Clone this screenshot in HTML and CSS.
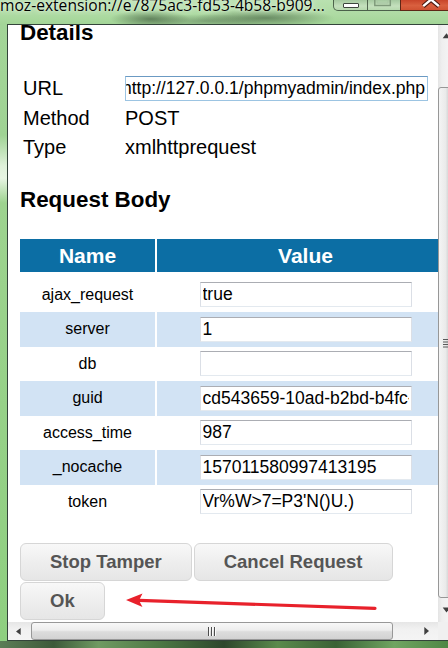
FILE: index.html
```html
<!DOCTYPE html>
<html lang="en">
<head>
<meta charset="utf-8">
<title>Tamper Request</title>
<link rel="stylesheet" href="styles.css">
</head>
<body>
<div class="window">
  <header class="titlebar">
    <span class="title">moz-extension://e7875ac3-fd53-4b58-b909...</span>
    <div class="caption">
      <span class="cap-btn cap-min"><span class="min-glyph"></span></span>
      <span class="cap-btn cap-max">
        <svg class="cap-svg" width="33" height="11" viewBox="0 0 33 11"><rect x="7" y="-7" width="16" height="12.5" fill="none" stroke="#7f9a7b" stroke-width="1.5"/><rect x="9.5" y="-4" width="11" height="7" fill="none" stroke="#a9c6a4" stroke-width="1"/></svg>
      </span>
      <span class="cap-btn cap-close">
        <svg class="cap-svg" width="48" height="11" viewBox="0 0 48 11"><path d="M22.7 6.2 L30.7 -0.6 L38.7 6.2" fill="none" stroke="#4a1a10" stroke-width="4.6" stroke-linejoin="miter"/><path d="M22.7 6.2 L30.7 -0.6 L38.7 6.2" fill="none" stroke="#ffffff" stroke-width="2.4" stroke-linejoin="miter"/></svg>
      </span>
    </div>
  </header>
  <div class="frame">
    <div class="left-edge"></div>
    <div class="client">
      <div class="viewport">
        <main class="page">
          <h2 class="heading heading-details">Details</h2>
          <div class="details">
            <span class="dlabel">URL</span>
            <div class="url-box"><span class="url-text">http://127.0.0.1/phpmyadmin/index.php</span></div>
            <span class="dlabel">Method</span><span class="dvalue">POST</span>
            <span class="dlabel">Type</span><span class="dvalue">xmlhttprequest</span>
          </div>
          <h2 class="heading heading-body">Request Body</h2>
          <div class="params">
            <div class="prow phead"><div class="pcell">Name</div><div class="pcell">Value</div></div>
            <div class="prow"><div class="pcell pname">ajax_request</div><div class="pcell pval"><input class="field" type="text" value="true"></div></div>
            <div class="prow alt"><div class="pcell pname">server</div><div class="pcell pval"><input class="field" type="text" value="1"></div></div>
            <div class="prow"><div class="pcell pname">db</div><div class="pcell pval"><input class="field" type="text" value=""></div></div>
            <div class="prow alt"><div class="pcell pname">guid</div><div class="pcell pval"><input class="field" type="text" value="cd543659-10ad-b2bd-b4fc-8e2a61d0f3b7"></div></div>
            <div class="prow"><div class="pcell pname">access_time</div><div class="pcell pval"><input class="field" type="text" value="987"></div></div>
            <div class="prow alt"><div class="pcell pname">_nocache</div><div class="pcell pval"><input class="field" type="text" value="157011580997413195"></div></div>
            <div class="prow"><div class="pcell pname">token</div><div class="pcell pval"><input class="field" type="text" value="Vr%W&gt;7=P3'N()U.)"></div></div>
          </div>
          <div class="actions">
            <button class="btn" type="button">Stop Tamper</button>
            <button class="btn" type="button">Cancel Request</button>
            <button class="btn" type="button">Ok</button>
          </div>
          <svg class="annot-arrow" width="260" height="26" viewBox="0 0 260 26">
            <line x1="19" y1="12.4" x2="255" y2="20.3" stroke="#e8212b" stroke-width="3.2" stroke-linecap="round"/>
            <polygon points="6,12 22.5,5.6 19,12.5 22.5,19" fill="#e8212b"/>
          </svg>
        </main>
        <div class="vscroll">
          <div class="vs-btn"><svg width="17" height="17" viewBox="0 0 17 17"><polygon points="8.5,8.3 12.3,13.3 4.7,13.3" fill="#404040"/></svg></div>
          <div class="vs-track vs-track-top"></div>
          <div class="vs-thumb"><svg width="10" height="10" viewBox="0 0 10 10"><g stroke-width="1"><line x1="1" y1="1.5" x2="9" y2="1.5" stroke="#5a5a5a"/><line x1="1" y1="4" x2="9" y2="4" stroke="#5a5a5a"/><line x1="1" y1="6.5" x2="9" y2="6.5" stroke="#5a5a5a"/><line x1="1" y1="9" x2="9" y2="9" stroke="#5a5a5a"/></g></svg></div>
          <div class="vs-track vs-track-bottom"></div>
          <div class="vs-btn"><svg width="17" height="17" viewBox="0 0 17 17"><polygon points="4.7,6.5 12.3,6.5 8.5,11.5" fill="#404040"/></svg></div>
          <div class="vs-tail"></div>
        </div>
      </div>
      <div class="hscroll">
        <div class="hs-btn hs-left"><svg width="23" height="18" viewBox="0 0 23 18"><polygon points="8,9.5 12.7,6 12.7,13" fill="#404040"/></svg></div>
        <div class="hs-thumb"><svg width="10" height="9" viewBox="0 0 10 9"><g stroke-width="1"><line x1="1.5" y1="0" x2="1.5" y2="9" stroke="#4d4d4d"/><line x1="2.5" y1="0" x2="2.5" y2="9" stroke="#fafafa"/><line x1="4.5" y1="0" x2="4.5" y2="9" stroke="#4d4d4d"/><line x1="5.5" y1="0" x2="5.5" y2="9" stroke="#fafafa"/><line x1="7.5" y1="0" x2="7.5" y2="9" stroke="#4d4d4d"/><line x1="8.5" y1="0" x2="8.5" y2="9" stroke="#fafafa"/></g></svg></div>
        <div class="hs-track"></div>
        <div class="hs-btn hs-right"><svg width="17" height="18" viewBox="0 0 17 18"><polygon points="3.3,5 8,9 3.3,13" fill="#404040"/></svg></div>
        <div class="hs-corner"></div>
      </div>
    </div>
  </div>
  <div class="bottom-edge"></div>
</div>
</body>
</html>
```

FILE: styles.css
```css
* {
  box-sizing: border-box;
}

html,
body {
  margin: 0;
  padding: 0;
}

body {
  width: 448px;
  height: 648px;
  overflow: hidden;
  font-family: "Liberation Sans", Arial, sans-serif;
  background: #9dd08f;
  color: #000;
}

.window {
  display: flex;
  flex-direction: column;
  height: 648px;
}

/* ---------- title bar ---------- */
.titlebar {
  height: 24px;
  flex: none;
  display: flex;
  align-items: flex-start;
  overflow: hidden;
  background:
    radial-gradient(ellipse 40px 9px at 150px 19px, rgba(40, 62, 40, 0.55), rgba(40, 62, 40, 0) 100%),
    radial-gradient(ellipse 70px 9px at 265px 18px, rgba(40, 62, 40, 0.5), rgba(40, 62, 40, 0) 100%),
    radial-gradient(ellipse 60px 7px at 205px 21px, rgba(70, 95, 70, 0.4), rgba(70, 95, 70, 0) 100%),
    linear-gradient(to bottom, #b9e1b0 0%, #aedba3 60%, #a3d597 100%);
}

.title {
  flex: 1;
  min-width: 0;
  font-family: "Open Sans", "Noto Sans", sans-serif;
  font-size: 15.6px;
  line-height: 20px;
  margin-top: -5px;
  white-space: nowrap;
  overflow: hidden;
  color: #000;
  text-shadow: 0 0 6px rgba(255, 255, 255, 0.85), 0 0 2px rgba(255, 255, 255, 0.6);
}

.caption {
  flex: none;
  display: flex;
  height: 11px;
}

.cap-btn {
  display: flex;
  align-items: center;
  justify-content: center;
  height: 11px;
  border: 1px solid rgba(52, 70, 52, 0.8);
  border-top: 0;
  overflow: hidden;
  background: linear-gradient(to bottom, #a5c9a0 0%, #c4e0bd 60%, #b6d9ae 100%);
}

.cap-min {
  width: 34px;
  border-bottom-left-radius: 5px;
  border-right: 0;
}

.cap-max {
  width: 33px;
  border-right: 0;
}

.cap-close {
  width: 48px;
  border-color: #5e2716;
  border-right: 0;
  background: linear-gradient(to bottom, #c8452a 0%, #d9603f 55%, #cf5232 100%);
}

.cap-svg {
  display: block;
}

.min-glyph {
  width: 16px;
  height: 5px;
  background: #ffffff;
  border: 1px solid #3d463d;
  border-radius: 1px;
}

/* ---------- frame ---------- */
.frame {
  display: flex;
  flex: none;
  height: 617px;
}

.left-edge {
  width: 7px;
  flex: none;
  background: linear-gradient(to bottom, #a3d598 0%, #9fd394 18%, #dff1da 23%, #e7f5e3 25%, #9dd38f 29%, #8ecf80 100%);
}

.client {
  flex: 1;
  min-width: 0;
  display: flex;
  flex-direction: column;
  border-top: 1px solid #33443a;
  border-left: 1px solid #33443a;
  border-bottom: 1px solid #33443a;
}

.viewport {
  display: flex;
  height: 597px;
  flex: none;
}

.page {
  flex: 1;
  min-width: 0;
  position: relative;
  overflow: hidden;
  background: #ffffff;
  padding-left: 12px;
}

/* ---------- content ---------- */
.heading {
  font-size: 22.4px;
  font-weight: bold;
  line-height: 26px;
  margin: 0;
  white-space: nowrap;
}

.heading-details {
  margin-top: -5px;
}

.heading-body {
  margin-top: 24.5px;
}

.details {
  display: grid;
  grid-template-columns: 102px 303px;
  grid-auto-rows: 29.5px;
  align-items: center;
  margin: 28px 0 0 3px;
  font-size: 20px;
}

.dlabel,
.dvalue {
  white-space: nowrap;
}

.url-box {
  height: 25px;
  display: flex;
  justify-content: flex-end;
  align-items: center;
  overflow: hidden;
  padding: 0 2px;
  font-size: 17.55px;
  white-space: nowrap;
  border: 1px solid #9cc4e2;
  border-top-color: #6b9ac3;
  background: #fff;
}

.url-text {
  flex: none;
}

.params {
  margin-top: 26px;
  width: 434px;
}

.prow {
  display: grid;
  grid-template-columns: 135px 297px;
  column-gap: 2px;
  height: 34.5px;
}

.phead {
  height: 33px;
  margin-bottom: 5.5px;
}

.phead .pcell {
  background: #0c6ea4;
  color: #ffffff;
  font-size: 21px;
  font-weight: bold;
  line-height: 33px;
  text-align: center;
}

.alt .pcell {
  background: #d2e3f4;
}

.pname {
  font-size: 16px;
  line-height: 34.5px;
  text-align: center;
  white-space: nowrap;
}

.pval {
  display: flex;
  align-items: center;
  justify-content: center;
}

.field {
  width: 212px;
  height: 25px;
  margin: 0;
  padding: 0 2px;
  font-family: "Liberation Sans", Arial, sans-serif;
  font-size: 17.5px;
  color: #000;
  background: #fff;
  border: 1px solid #dbdfe6;
  border-top-color: #abadb3;
  border-bottom-color: #e3e9ef;
  border-radius: 0;
  outline: none;
}

.actions {
  display: flex;
  flex-wrap: wrap;
  gap: 1px 2px;
  margin-top: 24px;
}

.btn {
  -webkit-appearance: none;
  appearance: none;
  height: 38px;
  margin: 0;
  padding: 0 29px;
  font-family: "Liberation Sans", Arial, sans-serif;
  font-size: 18.5px;
  font-weight: bold;
  color: #555555;
  background: linear-gradient(to bottom, #f8f8f8 0%, #eeeeee 50%, #e6e6e6 100%);
  border: 1px solid #d6d6d6;
  border-radius: 6px;
}

.annot-arrow {
  position: absolute;
  left: 112px;
  top: 563px;
  display: block;
}

/* ---------- vertical scrollbar ---------- */
.vscroll {
  width: 10px;
  flex: none;
  display: flex;
  flex-direction: column;
  overflow: hidden;
  background: linear-gradient(to right, #e4e4e4 0%, #efefef 40%, #f3f3f3 100%);
}

.vscroll > * {
  width: 17px;
  flex: none;
}

.vs-btn {
  height: 17px;
}

.vs-btn svg {
  display: block;
}

.vs-track-top {
  height: 45px;
}

.vs-thumb {
  height: 511px;
  display: flex;
  align-items: center;
  justify-content: center;
  border: 1px solid #979797;
  border-radius: 3px;
  background: linear-gradient(to right, #f4f4f4 0%, #eaeaea 45%, #dcdcdc 55%, #d3d3d3 100%);
}

.vs-track-bottom {
  height: 3px;
}

.vs-tail {
  height: 4px;
}

/* ---------- horizontal scrollbar ---------- */
.hscroll {
  height: 18px;
  flex: none;
  display: flex;
  background: linear-gradient(to bottom, #e6e6e6 0%, #f1f1f1 40%, #f4f4f4 100%);
}

.hs-btn svg {
  display: block;
}

.hs-left {
  width: 23px;
  flex: none;
}

.hs-thumb {
  width: 362px;
  flex: none;
  display: flex;
  align-items: center;
  justify-content: center;
  border: 1px solid #989898;
  border-radius: 3px;
  background: linear-gradient(to bottom, #f8f8f8 0%, #ededed 45%, #dcdcdc 55%, #d2d2d2 100%);
}

.hs-track {
  flex: 1;
}

.hs-right {
  width: 17px;
  flex: none;
}

.hs-corner {
  width: 10px;
  flex: none;
  background: #f0f0f0;
}

.bottom-edge {
  flex: none;
  height: 7px;
  background: linear-gradient(to right, #5c7d56 0%, #3d5a3a 12%, #6f9a62 22%, #4e7a45 35%, #2d472c 50%, #5a8a4c 62%, #3a6235 75%, #6fa561 88%, #4f8745 100%);
}
```
